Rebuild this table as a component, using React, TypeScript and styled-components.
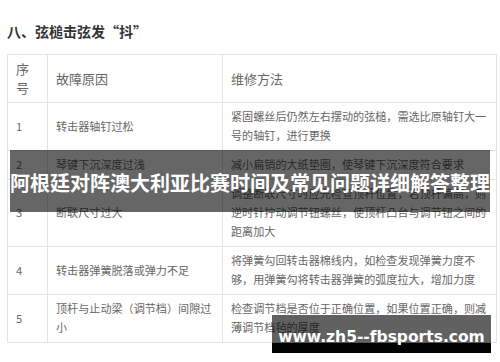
import React from 'react'
import styled, { createGlobalStyle } from 'styled-components'

const GlobalStyle = createGlobalStyle`
  body {
    margin: 0;
    background: #fff;
    font-family: "Noto Sans CJK SC", "Noto Sans", sans-serif;
  }
`

const Page = styled.div`
  position: relative;
  width: 500px;
  height: 362px;
  overflow: hidden;
  padding: 21px 4px 0 7px;
  box-sizing: border-box;
`

const Title = styled.h2`
  margin: 0 0 13px;
  font-size: 14px;
  line-height: 20px;
  font-weight: 700;
  color: #333;
`

const Table = styled.table`
  width: 489px;
  border-collapse: collapse;
  table-layout: fixed;
  color: #666;
  td, th {
    border: 1px solid #e3e3e3;
    padding: 4px 6px 5px 8px;
    text-align: left;
    vertical-align: middle;
    font-weight: 400;
  }
  th {
    font-size: 13px;
    line-height: 19px;
  }
  td {
    font-size: 11.1px;
    line-height: 19px;
  }
`

const Banner = styled.div`
  position: absolute;
  left: 10px;
  top: 150px;
  width: 480px;
  height: 62px;
  background: rgba(0, 0, 0, 0.6);
  display: flex;
  align-items: center;
  justify-content: center;
`

const BannerText = styled.span`
  white-space: nowrap;
  color: #fff;
  font-size: 20px;
  font-weight: 700;
  margin-top: 2px;
`

const Mark = styled.div`
  position: absolute;
  left: 272px;
  top: 315px;
  width: 219px;
  height: 28px;
  background: rgba(0, 0, 0, 0.62);
  border-bottom: 10px solid #000;
  display: flex;
  align-items: flex-end;
  justify-content: center;
`

const MarkText = styled.span`
  font-family: "DejaVu Sans", sans-serif;
  font-weight: 700;
  font-size: 15.5px;
  line-height: 15px;
  white-space: nowrap;
  color: #fff;
  margin-bottom: -2px;
`

const rows = [
  ['1', '转击器轴钉过松', '紧固螺丝后仍然左右摆动的弦槌，需选比原轴钉大一号的轴钉，进行更换'],
  ['2', '琴键下沉深度过浅', '减小扁销的大纸垫圈，使琴键下沉深度符合要求'],
  ['3', '断联尺寸过大', '调整断联尺寸时应先检查顶杆位置，若顶杆偏高，则逆时针拧动调节钮螺丝，使顶杆凸台与调节钮之间的距离加大'],
  ['4', '转击器弹簧脱落或弹力不足', '将弹簧勾回转击器棉线内，如检查发现弹簧力度不够，用弹簧勾将转击器弹簧的弧度拉大，增加力度'],
  ['5', '顶杆与止动梁（调节档）间隙过小', '检查调节档是否位于正确位置，如果位置正确，则减薄调节档毡的厚度'],
]

export default function App() {
  return (
    <Page>
      <GlobalStyle />
      <Title>八、弦槌击弦发“抖”</Title>
      <Table>
        <colgroup>
          <col style={{ width: 40 }} />
          <col style={{ width: 175 }} />
          <col style={{ width: 274 }} />
        </colgroup>
        <thead>
          <tr>
            <th>序号</th>
            <th>故障原因</th>
            <th>维修方法</th>
          </tr>
        </thead>
        <tbody>
          {rows.map((r) => (
            <tr key={r[0]}>
              <td>{r[0]}</td>
              <td>{r[1]}</td>
              <td>{r[2]}</td>
            </tr>
          ))}
        </tbody>
      </Table>
      <Banner>
        <BannerText>阿根廷对阵澳大利亚比赛时间及常见问题详细解答整理</BannerText>
      </Banner>
      <Mark>
        <MarkText>www.zh5--fbsports.com</MarkText>
      </Mark>
    </Page>
  )
}
